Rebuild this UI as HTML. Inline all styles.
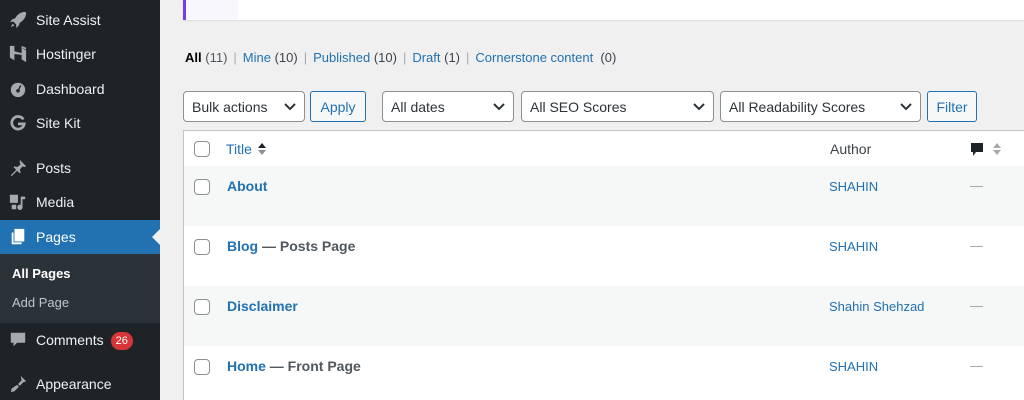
<!DOCTYPE html>
<html style="overflow:hidden;height:400px"><head><style>
*{margin:0;padding:0;box-sizing:border-box}
body{width:1024px;height:400px;overflow:hidden;background:#f0f0f1;font-family:"Liberation Sans",sans-serif;font-size:13px;color:#3c434a;position:relative}
.sb{position:absolute;left:0;top:0;width:160px;height:400px;background:#1d2327}
.mi{position:absolute;left:0;width:160px;height:34px;color:#f0f0f1;font-size:14px;line-height:34px;padding-left:36px}
.ic{position:absolute;left:8px;top:8px;width:20px;height:18px;color:#a7aaad}
.sub{position:absolute;left:0;top:254px;width:160px;height:69px;background:#2c3338}
.a{color:#2271b1}
.sep{color:#a7aaad;margin:0 6px}
.top{position:absolute;left:183px;top:0;width:841px;height:20px;background:#fff;border-left:3px solid #7341e6;box-shadow:0 1px 1px rgba(0,0,0,.08)}
.top i{position:absolute;left:0;top:0;width:52px;height:20px;background:#f7f7fd}
.sel{position:absolute;top:91px;height:31px;background:#fff;border:1px solid #8c8f94;border-radius:4px;font-size:14px;line-height:31px;padding-left:8px;color:#2c3338}
.sel svg{position:absolute;right:8px;top:11px}
.btn{position:absolute;top:91px;height:31px;background:#f6f7f7;border:1px solid #2271b1;border-radius:3px;color:#2271b1;font-size:14px;line-height:31px;text-align:center}
.tbl{position:absolute;left:183px;top:130px;width:841px;height:270px;background:#fff;border:1px solid #c3c4c7;border-right:0;border-bottom:0}
.row{position:absolute;left:0;width:841px;height:60px}
.cb{position:absolute;left:10px;width:16px;height:16px;border:1px solid #8c8f94;border-radius:4px;background:#fff}
.t{position:absolute;left:43px;font-size:14px;font-weight:bold;color:#2271b1}
.t span{color:#50575e}
.au{position:absolute;left:645px;font-size:13px;color:#2271b1}
.d{position:absolute;left:786px;width:13px;height:1px;background:#a7aaad}
</style></head><body>
<div class="sb">
<div class="mi" style="top:3px">Site Assist<svg class="ic" viewBox="0 0 20 20"><path fill="#a7aaad" d="M18 1c-5 0-9 3-11 7l-3 1-3 3 4 0 3 3 0 4 3-3 1-3c4-2 7-6 7-11zM4 14l-2 4 4-2z"/></svg></div>
<div class="mi" style="top:37px">Hostinger<svg class="ic" viewBox="0 0 20 20"><path fill="#a7aaad" d="M1 1h5v6l8 2V3l5 3v13l-5-3v-5l-8-1v7L1 14zM14 1l5 2v2l-5-2z"/></svg></div>
<div class="mi" style="top:72px">Dashboard<svg class="ic" viewBox="0 0 20 20"><circle cx="10" cy="11" r="8" fill="#a7aaad"/><circle cx="10" cy="12" r="2" fill="#1d2327"/><path d="M10 12l3-6" stroke="#1d2327" stroke-width="1.5"/></svg></div>
<div class="mi" style="top:106px">Site Kit<svg class="ic" viewBox="0 0 20 20"><path fill="none" stroke="#a7aaad" stroke-width="3" d="M16 6a7 7 0 1 0 1 5H10"/></svg></div>
<div class="mi" style="top:151px">Posts<svg class="ic" viewBox="0 0 20 20"><path fill="#a7aaad" d="M12 1l7 7-2 1-2-1-3 4 1 3-1 1-3-3-6 6-1-1 6-6-3-3 1-1 3 1 4-3-1-2z"/></svg></div>
<div class="mi" style="top:185px">Media<svg class="ic" viewBox="0 0 20 20"><path fill="#a7aaad" d="M1 2h9v9H1zM12 4h6v3h-3v8a3 3 0 1 1-2-2V4zM3 13h5v5H3z"/></svg></div>
<div class="mi" style="top:220px;background:#2271b1;color:#fff">Pages<svg class="ic" viewBox="0 0 20 20"><path fill="#fff" d="M6 1h11v14H6zM3 5h2v11h9v2H3z"/></svg><div style="position:absolute;right:0;top:9px;border:8px solid transparent;border-right-color:#f0f0f1"></div></div>
<div class="sub"><div style="position:absolute;left:12px;top:12px;color:#fff;font-weight:bold;font-size:13px">All Pages</div><div style="position:absolute;left:12px;top:41px;color:#c3c4c7;font-size:13px">Add Page</div></div>
<div class="mi" style="top:323px">Comments <span style="display:inline-block;background:#d63638;color:#fff;border-radius:9px;font-size:11px;line-height:18px;height:18px;padding:0 5px;vertical-align:middle;margin-left:3px">26</span><svg class="ic" viewBox="0 0 20 20"><path fill="#a7aaad" d="M2 2h16v11H9l-4 4v-4H2z"/></svg></div>
<div class="mi" style="top:367px">Appearance<svg class="ic" viewBox="0 0 20 20"><path fill="#a7aaad" d="M13 1l6 6-3 1-4 4-2-2 4-4zM9 11l2 2-5 5-4 1 1-4z"/></svg></div>
</div>
<div class="top"><i></i></div>
<div style="position:absolute;left:185px;top:50px;font-size:13px;white-space:nowrap"><b style="color:#000;font-weight:bold">All</b> <span style="color:#50575e">(11)</span><span class="sep">|</span><span class="a">Mine</span> (10)<span class="sep">|</span><span class="a">Published</span> (10)<span class="sep">|</span><span class="a">Draft</span> (1)<span class="sep">|</span><span class="a">Cornerstone content</span>&nbsp; (0)</div>
<div class="sel" style="left:183px;width:122px">Bulk actions<svg width="12" height="8" viewBox="0 0 12 8"><path d="M1 1l5 5 5-5" fill="none" stroke="#2c3338" stroke-width="2"/></svg></div>
<div class="btn" style="left:310px;width:56px">Apply</div>
<div class="sel" style="left:382px;width:132px">All dates<svg width="12" height="8" viewBox="0 0 12 8"><path d="M1 1l5 5 5-5" fill="none" stroke="#2c3338" stroke-width="2"/></svg></div>
<div class="sel" style="left:521px;width:193px">All SEO Scores<svg width="12" height="8" viewBox="0 0 12 8"><path d="M1 1l5 5 5-5" fill="none" stroke="#2c3338" stroke-width="2"/></svg></div>
<div class="sel" style="left:720px;width:201px">All Readability Scores<svg width="12" height="8" viewBox="0 0 12 8"><path d="M1 1l5 5 5-5" fill="none" stroke="#2c3338" stroke-width="2"/></svg></div>
<div class="btn" style="left:927px;width:50px">Filter</div>
<div class="tbl">
<div style="position:absolute;left:0;top:0;width:841px;height:36px;border-bottom:1px solid #c3c4c7">
<div class="cb" style="top:10px"></div>
<div style="position:absolute;left:42px;top:10px;font-size:14px;color:#2271b1">Title</div>
<svg style="position:absolute;left:74px;top:11px" width="8" height="14" viewBox="0 0 8 14"><path d="M0 6l4-5 4 5z" fill="#1d2327"/><path d="M0 8l4 5 4-5z" fill="#8c8f94"/></svg>
<div style="position:absolute;left:646px;top:10px;font-size:14px;color:#3c434a">Author</div>
<svg style="position:absolute;left:786px;top:11px" width="14" height="15" viewBox="0 0 14 15"><path d="M1 1h12v9H6l-3 4v-4H1z" fill="#1d2327"/></svg>
<svg style="position:absolute;left:809px;top:11px" width="8" height="14" viewBox="0 0 8 14"><path d="M0 6l4-5 4 5z" fill="#a7aaad"/><path d="M0 8l4 5 4-5z" fill="#a7aaad"/></svg>
</div>
<div class="row" style="top:35px;background:#f6f7f7"><div class="cb" style="top:13px"></div><div class="t" style="top:12px">About</div><div class="au" style="top:13px">SHAHIN</div><div class="d" style="top:20px"></div></div>
<div class="row" style="top:95px"><div class="cb" style="top:13px"></div><div class="t" style="top:12px">Blog <span>— Posts Page</span></div><div class="au" style="top:13px">SHAHIN</div><div class="d" style="top:20px"></div></div>
<div class="row" style="top:155px;background:#f6f7f7"><div class="cb" style="top:13px"></div><div class="t" style="top:12px">Disclaimer</div><div class="au" style="top:13px">Shahin Shehzad</div><div class="d" style="top:20px"></div></div>
<div class="row" style="top:215px;height:55px"><div class="cb" style="top:13px"></div><div class="t" style="top:12px">Home <span>— Front Page</span></div><div class="au" style="top:13px">SHAHIN</div><div class="d" style="top:20px"></div></div>
</div>
</body></html>
